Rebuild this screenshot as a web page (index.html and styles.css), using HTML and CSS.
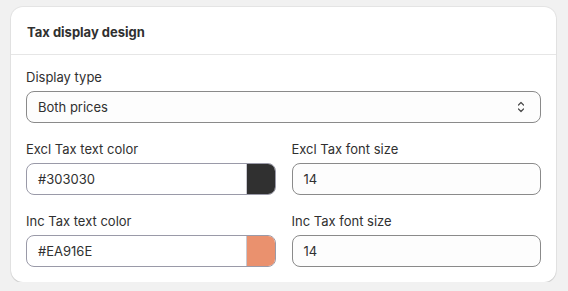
FILE: index.html
```html
<!DOCTYPE html>
<html>
<head>
<meta charset="utf-8">
<link rel="stylesheet" href="styles.css">
</head>
<body>
<div class="card">
  <div class="card-header">Tax display design</div>
  <div class="card-body">
    <div class="field">
      <div class="label">Display type</div>
      <div class="select">
        <span>Both prices</span>
        <svg class="chev" width="12" height="14" viewBox="0 0 12 14"><path d="M3.5 5 L6 2.5 L8.5 5 M3.5 9 L6 11.5 L8.5 9" fill="none" stroke="#4a4a4a" stroke-width="1.2" stroke-linecap="round" stroke-linejoin="round"/></svg>
      </div>
    </div>
    <div class="grid">
      <div class="field">
        <div class="label">Excl Tax text color</div>
        <div class="input color">
          <span class="val">#303030</span>
          <span class="swatch dark"></span>
        </div>
      </div>
      <div class="field">
        <div class="label">Excl Tax font size</div>
        <div class="input"><span class="val">14</span></div>
      </div>
      <div class="field">
        <div class="label">Inc Tax text color</div>
        <div class="input color">
          <span class="val">#EA916E</span>
          <span class="swatch orange"></span>
        </div>
      </div>
      <div class="field">
        <div class="label">Inc Tax font size</div>
        <div class="input"><span class="val">14</span></div>
      </div>
    </div>
  </div>
</div>
</body>
</html>
```
FILE: styles.css
```css
html, body {
  margin: 0;
  padding: 0;
  background: #f1f1f1;
}
body {
  font-family: Inter, "Noto Sans", sans-serif;
  font-size: 13px;
  color: #303030;
  padding: 7px 12px 0 11px;
}
.card {
  background: #fff;
  border-radius: 12px;
  box-shadow: 0 0 0 1px rgba(0,0,0,0.05), 0 1px 1px rgba(0,0,0,0.12);
  overflow: hidden;
}
.card-header {
  padding: 15px 15px 12px 16px;
  line-height: 20px;
  font-weight: 650;
  border-bottom: 1px solid #e6e6e6;
}
.card-body {
  padding: 12px 15px 15px;
  display: flex;
  flex-direction: column;
  gap: 16px;
}
.field {
  display: flex;
  flex-direction: column;
  gap: 4px;
}
.label {
  line-height: 20px;
}
.grid {
  display: grid;
  grid-template-columns: 1fr 1fr;
  column-gap: 16px;
  row-gap: 16px;
}
.select, .input {
  height: 32px;
  box-sizing: border-box;
  border: 1px solid #8a8a8a;
  border-radius: 8px;
  background: #fdfdfd;
  display: flex;
  align-items: center;
  padding: 0 12px 0 11px;
}
.select {
  justify-content: space-between;
  padding-right: 13px;
}
.chev {
  display: block;
}
.input.color {
  padding-right: 0;
  border-color: #9a9aa8;
  overflow: hidden;
  background: #fff;
}
.val {
  flex: 1;
}
.swatch {
  width: 28px;
  align-self: stretch;
  border-left: 1px solid #c8c8d0;
}
.swatch.dark { background: #303030; }
.swatch.orange { background: #ea916e; }
```
